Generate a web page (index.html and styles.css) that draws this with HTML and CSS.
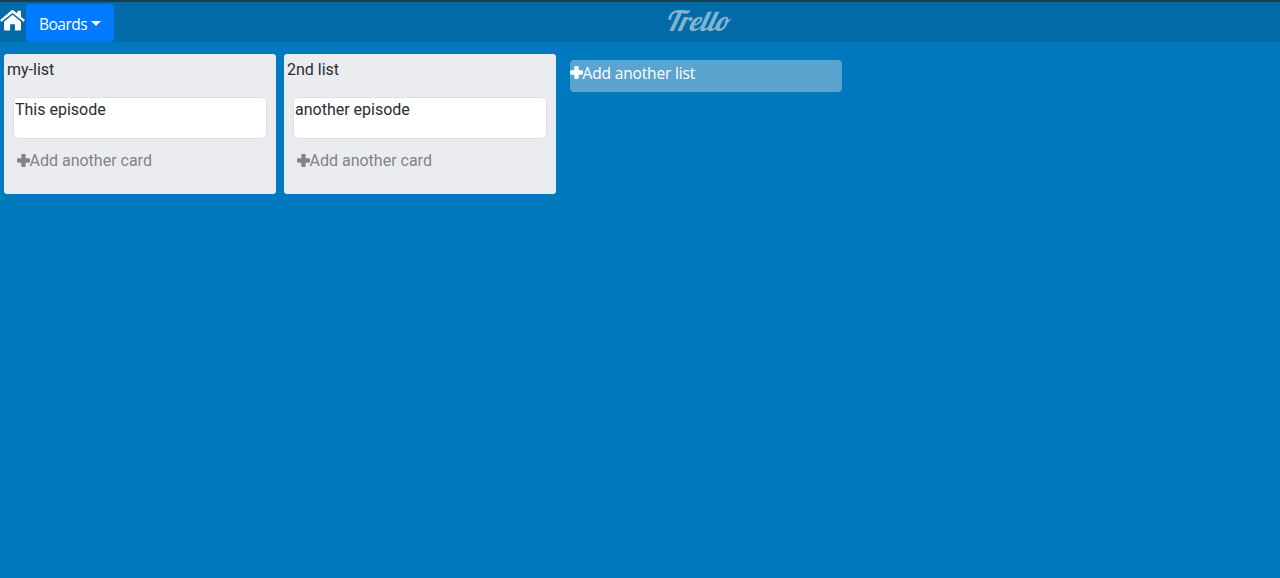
FILE: index.html
```html
<!DOCTYPE html>
<html lang="en">
<head>
<meta charset="utf-8">
<title>Trello</title>
<link rel="stylesheet" href="styles.css">
</head>
<body>
<svg class="symbols" aria-hidden="true">
  <symbol id="plus" viewBox="0 0 12 12"><path d="M5 0H7Q8 0 8 1V4H11Q12 4 12 5V7Q12 8 11 8H8V11Q8 12 7 12H5Q4 12 4 11V8H1Q0 8 0 7V5Q0 4 1 4H4V1Q4 0 5 0Z"/></symbol>
</svg>
<header class="navbar">
  <div class="nav-left">
    <a class="home" href="#" aria-label="Home"><svg viewBox="0 0 25 21"><path d="M12.500 4.700 21 11.800v7.700q0 .9-.9.900h-5.200v-6.200h-4.800v6.200H4.900q-.9 0-.9-.9v-7.700z"/><path d="M11.300.5q1.200-1 2.400 0L17.300 3.600V1.200q0-.5.500-.5h2.700q.5 0 .5.500v5.500l3.600 3.100q.4.300.1.700l-.8 1q-.3.400-.7 0L12.500 2.900 1.800 11.500q-.4.400-.7 0l-.8-1q-.3-.4.100-.7z"/></svg></a>
    <button class="boards"><span class="boards-label">Boards</span><span class="caret"></span></button>
  </div>
  <a class="logo" href="#">Trello</a>
</header>
<main class="board">
  <section class="list">
    <h2 class="list-title">my-list</h2>
    <article class="card">This episode</article>
    <a class="add-card" href="#"><svg class="plus"><use href="#plus"/></svg>Add another card</a>
  </section>
  <section class="list">
    <h2 class="list-title">2nd list</h2>
    <article class="card">another episode</article>
    <a class="add-card" href="#"><svg class="plus"><use href="#plus"/></svg>Add another card</a>
  </section>
  <a class="add-list" href="#"><svg class="plus"><use href="#plus"/></svg><span>Add another list</span></a>
</main>
</body>
</html>
```
FILE: styles.css
```css
* { box-sizing: border-box; }
body {
  margin: 0;
  min-height: 578px;
  background: #0079bf;
  font: 16px/24px Roboto, sans-serif;
  color: #292c31;
  overflow: hidden;
}
a { color: inherit; text-decoration: none; }
.symbols { display: none; }
.navbar {
  height: 42px;
  border-top: 2px solid #263845;
  background: #026aa7;
  display: grid;
  grid-template-columns: 665px auto 1fr;
}
.nav-left { display: flex; align-items: flex-start; padding-top: 2px; }
.home { width: 26px; height: 28px; padding-top: 6px; }
.home svg { display: block; width: 25px; height: 21px; fill: #fff; }
.boards {
  width: 88px;
  height: 38px;
  border: 0;
  border-radius: 4px;
  padding: 2px 0 0 13px;
  background: #007bff;
  color: #fff;
  font: 15.500px/24px "Open Sans", sans-serif;
  display: flex;
  align-items: center;
}
.boards-label { width: 52px; text-align: left; letter-spacing: -0.5px; }
.caret {
  margin-top: -2px;
  border: 5px solid transparent;
  border-top-color: #fff;
  border-bottom: 0;
}
.logo {
  font: italic 28px/38px "Lobster", "Liberation Serif", serif;
  color: #80b4d3;
}
.board { display: flex; align-items: flex-start; padding: 12px 4px; }
.list {
  width: 272px;
  height: 140px;
  margin-right: 8px;
  border-radius: 3px;
  background: #ebecf0;
}
.list-title { margin: 0; padding: 4px 3px 0; font-size: 16px; font-weight: 400; line-height: 24px; }
.card {
  width: 254px;
  height: 42px;
  margin: 15px 9px 0;
  padding: 0 1px;
  border: 1px solid #dfe0e4;
  border-radius: 4px;
  background: #fff;
}
.plus { width: 13px; height: 13px; fill: currentColor; flex: none; }
.add-card { display: flex; align-items: center; margin: 10px 0 0 12.500px; color: #828384; }
.add-card .plus { margin-top: -1px; }
.add-list {
  width: 272px;
  height: 32px;
  margin: 6px 0 0 6px;
  border-radius: 4px;
  background: #5ba4cf;
  color: #fff;
  font: 15.500px/24px "Open Sans", sans-serif;
  letter-spacing: -0.15px;
  display: flex;
  align-items: flex-start;
}
.add-list .plus { margin-top: 6px; margin-right: -0.5px; }
.add-list span { padding-top: 1px; }
```
